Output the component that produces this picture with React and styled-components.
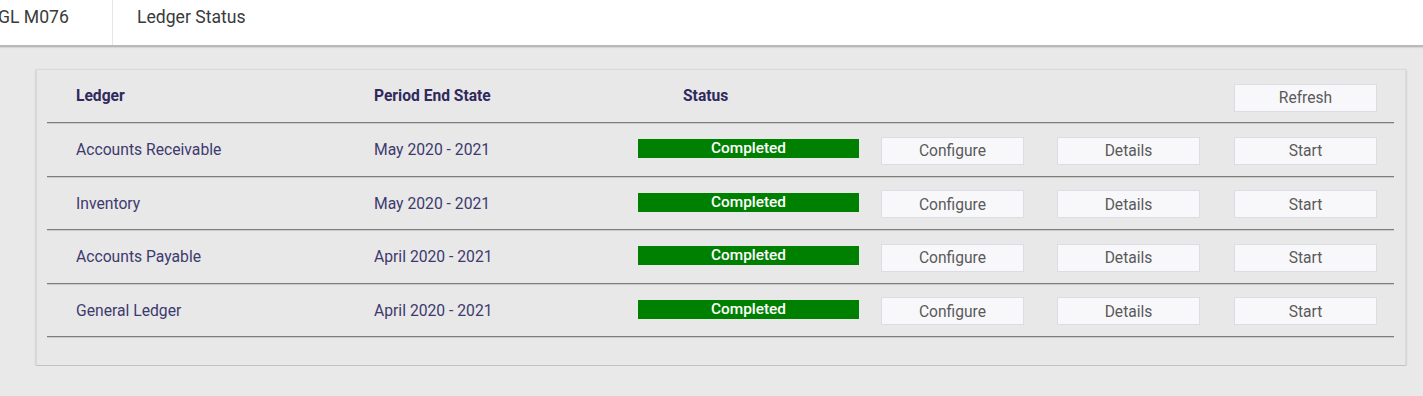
import React from "react";
import styled, { createGlobalStyle } from "styled-components";

const GlobalStyle = createGlobalStyle`
  html, body {
    margin: 0;
    padding: 0;
    background: #e9e9e9;
    font-family: Roboto, "Liberation Sans", sans-serif;
  }
  * {
    box-sizing: border-box;
  }
`;

const TopBar = styled.header`
  display: flex;
  height: 47px;
  background: #ffffff;
  border-bottom: 2px solid #b9b9bd;
  box-shadow: 0 1px 1px rgba(0, 0, 0, 0.08);
`;

const Tab = styled.div`
  display: flex;
  align-items: flex-start;
  padding: 6px 24px 0;
  font-size: 17.6px;
  line-height: 22px;
  color: #3a3a3a;
  ${(p) => p.first && `
    width: 115px;
    margin-left: -2px;
    padding-left: 0;
    border-right: 1px solid #e6e6e6;
  `}
`;

const Card = styled.section`
  margin: 22px 17px 0 36px;
  padding: 0 11px 28px 10px;
  background: #e8e8e8;
  border: 1px solid #dadada;
  border-bottom: 1px solid #c2c2c2;
  box-shadow: 0 1px 2px rgba(0, 0, 0, 0.25);
`;

const Row = styled.div`
  display: grid;
  grid-template-columns: 298px 264px 243px 176px 177px 143px;
  align-items: center;
  height: ${(p) => (p.head ? "53px" : "53.5px")};
  padding: 0 17px 0 29px;
  border-bottom: 1px solid #7d7d7d;
  box-shadow: 0 1px 0 rgba(0, 0, 0, 0.12);
`;

const HeadCell = styled.div`
  font-size: 15.6px;
  font-weight: 700;
  color: #2f2a5e;
  padding-left: ${(p) => p.indent || 0}px;
`;

const Cell = styled.div`
  font-size: 15.7px;
  color: #3d3a6e;
  margin-top: 1px;
`;

const StatusBar = styled.div`
  width: 221px;
  height: 19px;
  background: #008000;
  color: #ffffff;
  font-size: 15.4px;
  font-weight: 500;
  line-height: 19px;
  text-align: center;
  margin-top: -1px;
`;

const Button = styled.button`
  width: 143px;
  height: 28px;
  margin-top: 3px;
  padding: 1px 0 0;
  background: #f8f8fb;
  border: 1px solid #dcdce6;
  border-radius: 0;
  font-family: Roboto, "Liberation Sans", sans-serif;
  font-size: 15.6px;
  color: #5a5a5a;
  cursor: pointer;
`;

const ledgers = [
  { name: "Accounts Receivable", period: "May 2020 - 2021" },
  { name: "Inventory", period: "May 2020 - 2021" },
  { name: "Accounts Payable", period: "April 2020 - 2021" },
  { name: "General Ledger", period: "April 2020 - 2021" },
];

const App = () => (
  <>
    <GlobalStyle />
    <TopBar>
      <Tab first>GL M076</Tab>
      <Tab>Ledger Status</Tab>
    </TopBar>
    <Card>
      <Row head>
        <HeadCell>Ledger</HeadCell>
        <HeadCell>Period End State</HeadCell>
        <HeadCell indent={45}>Status</HeadCell>
        <div />
        <div />
        <Button>Refresh</Button>
      </Row>
      {ledgers.map((l) => (
        <Row key={l.name}>
          <Cell>{l.name}</Cell>
          <Cell>{l.period}</Cell>
          <StatusBar>Completed</StatusBar>
          <Button>Configure</Button>
          <Button>Details</Button>
          <Button>Start</Button>
        </Row>
      ))}
    </Card>
  </>
);

export default App;
